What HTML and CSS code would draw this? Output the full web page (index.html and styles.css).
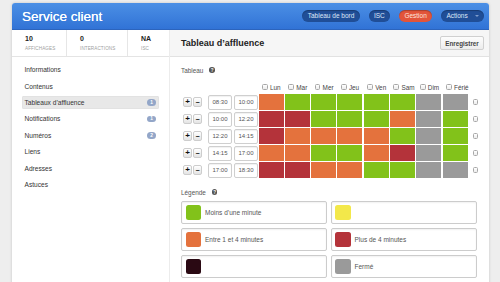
FILE: index.html
```html
<!DOCTYPE html>
<html lang="fr">
<head>
<meta charset="utf-8">
<title>Service client</title>
<link rel="stylesheet" href="styles.css">
</head>
<body>
<div class="app">
  <header class="topbar">
    <h1 class="brand">Service client</h1>
    <nav class="pills">
      <span class="pill">Tableau de bord</span>
      <span class="pill">ISC</span>
      <span class="pill active">Gestion</span>
      <span class="pill">Actions <span class="caret"></span></span>
    </nav>
  </header>
  <div class="body">
    <aside class="sidebar">
      <div class="stats">
        <div class="stat s1"><b>10</b><span>AFFICHAGES</span></div>
        <div class="stat s2"><b>0</b><span>INTERACTIONS</span></div>
        <div class="stat s3"><b>NA</b><span>ISC</span></div>
      </div>
      <ul class="nav">
        <li>Informations</li>
        <li>Contenus</li>
        <li class="sel">Tableaux d’affluence <span class="badge">1</span></li>
        <li>Notifications <span class="badge">1</span></li>
        <li>Numéros <span class="badge">2</span></li>
        <li>Liens</li>
        <li>Adresses</li>
        <li>Astuces</li>
      </ul>
    </aside>
    <main class="main">
      <div class="titlebar">
        <h2>Tableau d’affluence</h2>
        <button class="save">Enregistrer</button>
      </div>
      <div class="content">
        <div class="label">Tableau <span class="help">?</span></div>
        <div class="table">
          <div class="thead">
            <div class="spacer"></div>
            <div class="cells">
              <div class="hc"><span class="cb"></span>Lun</div>
              <div class="hc"><span class="cb"></span>Mar</div>
              <div class="hc"><span class="cb"></span>Mer</div>
              <div class="hc"><span class="cb"></span>Jeu</div>
              <div class="hc"><span class="cb"></span>Ven</div>
              <div class="hc"><span class="cb"></span>Sam</div>
              <div class="hc"><span class="cb"></span>Dim</div>
              <div class="hc"><span class="cb"></span>Férié</div>
            </div>
          </div>
          <div class="row">
            <span class="pm">+</span><span class="pm minus">−</span>
            <span class="time">08:30</span><span class="time t2">10:00</span>
            <div class="cells"><i class="o"></i><i class="g"></i><i class="g"></i><i class="g"></i><i class="g"></i><i class="g"></i><i class="x"></i><i class="x"></i></div>
            <span class="cb rcb"></span>
          </div>
          <div class="row">
            <span class="pm">+</span><span class="pm minus">−</span>
            <span class="time">10:00</span><span class="time t2">12:20</span>
            <div class="cells"><i class="r"></i><i class="r"></i><i class="g"></i><i class="g"></i><i class="g"></i><i class="o"></i><i class="x"></i><i class="g"></i></div>
            <span class="cb rcb"></span>
          </div>
          <div class="row">
            <span class="pm">+</span><span class="pm minus">−</span>
            <span class="time">12:20</span><span class="time t2">14:15</span>
            <div class="cells"><i class="r"></i><i class="o"></i><i class="o"></i><i class="o"></i><i class="o"></i><i class="g"></i><i class="x"></i><i class="g"></i></div>
            <span class="cb rcb"></span>
          </div>
          <div class="row">
            <span class="pm">+</span><span class="pm minus">−</span>
            <span class="time">14:15</span><span class="time t2">17:00</span>
            <div class="cells"><i class="o"></i><i class="o"></i><i class="g"></i><i class="g"></i><i class="o"></i><i class="r"></i><i class="x"></i><i class="g"></i></div>
            <span class="cb rcb"></span>
          </div>
          <div class="row">
            <span class="pm">+</span><span class="pm minus">−</span>
            <span class="time">17:00</span><span class="time t2">18:30</span>
            <div class="cells"><i class="r"></i><i class="r"></i><i class="o"></i><i class="o"></i><i class="g"></i><i class="g"></i><i class="x"></i><i class="x"></i></div>
            <span class="cb rcb"></span>
          </div>
        </div>
        <div class="label legend-label">Légende <span class="help">?</span></div>
        <div class="legend">
          <div class="item"><i class="sw g"></i>Moins d’une minute</div>
          <div class="item"><i class="sw y"></i></div>
          <div class="item"><i class="sw o"></i>Entre 1 et 4 minutes</div>
          <div class="item"><i class="sw r"></i>Plus de 4 minutes</div>
          <div class="item"><i class="sw d"></i></div>
          <div class="item"><i class="sw x"></i>Fermé</div>
        </div>
      </div>
    </main>
  </div>
</div>
</body>
</html>
```

FILE: styles.css
```css
* { box-sizing: border-box; }
html, body { height: 100%; }
body {
  margin: 0;
  background: #eeeeee;
  font-family: "Liberation Sans", Arial, sans-serif;
  color: #333;
  overflow: hidden;
}
.app {
  margin: 3px 0 0 12px;
  width: 477px;
  background: #fff;
  border-radius: 3px 3px 0 0;
  box-shadow: 0 0 3px rgba(0,0,0,0.18);
  min-height: 300px;
}
.topbar {
  height: 27px;
  display: flex;
  align-items: center;
  justify-content: space-between;
  padding: 0 5px 0 10px;
  background: linear-gradient(#4b8fe5, #3173d6);
  border-radius: 3px 3px 0 0;
  border-bottom: 1px solid #2c64bd;
}
.brand {
  margin: 0;
  font-size: 13.5px;
  font-weight: normal;
  color: #fff;
  text-shadow: 0 0 0.4px #fff;
}
.pills { display: flex; align-items: center; gap: 9px; }
.pill {
  height: 12.5px;
  line-height: 12.5px;
  padding: 0 5.3px;
  border-radius: 7px;
  background: #204e97;
  color: #dfe8f8;
  font-size: 6.5px;
  box-shadow: inset 0 1px 1px rgba(0,0,0,0.25);
  display: flex;
  align-items: center;
}
.pill.active { background: #e2543a; color: #ffe5dd; }
.caret {
  display: inline-block;
  width: 0; height: 0;
  margin-left: 7px;
  border-left: 2px solid transparent;
  border-right: 2px solid transparent;
  border-top: 2px solid #7f9ccc;
}
.body { display: flex; }
.sidebar {
  width: 158px;
  flex: none;
  border-right: 1px solid #ececec;
  min-height: 260px;
}
.stats {
  display: flex;
  height: 27px;
  border-bottom: 1px solid #e4e4e4;
}
.stat {
  display: flex;
  flex-direction: column;
  padding: 5px 0 0 13px;
  border-right: 1px solid #e6e6e6;
}
.stat b { font-size: 7px; line-height: 8px; color: #222; }
.stat span { font-size: 4.6px; color: #a0a0a0; margin-top: 3px; letter-spacing: 0.1px; }
.s1 { width: 55px; }
.s2 { width: 61px; }
.s3 { flex: 1; border-right: none; }
.nav {
  list-style: none;
  margin: 0;
  padding: 6px 10px 0 10px;
}
.nav li {
  height: 13.4px;
  margin-bottom: 3px;
  display: flex;
  align-items: center;
  justify-content: space-between;
  padding: 0 3px 0 2.5px;
  font-size: 6.6px;
  color: #333;
  border-radius: 2px;
}
.nav li.sel { background: #e8e8e8; box-shadow: inset 0 0 0 0.5px #dcdcdc; }
.badge {
  width: 9px;
  height: 6.5px;
  border-radius: 3.5px;
  background: #93a6c8;
  color: #fff;
  font-size: 4.8px;
  font-weight: bold;
  display: flex;
  align-items: center;
  justify-content: center;
}
.main { flex: 1; }
.titlebar {
  height: 27px;
  display: flex;
  align-items: center;
  justify-content: space-between;
  padding: 0 5px 0 11px;
  background: #f6f6f6;
  border-bottom: 1px solid #e2e2e2;
}
.titlebar h2 {
  margin: 0;
  font-size: 9px;
  font-weight: bold;
  color: #222;
}
.save {
  height: 14px;
  width: 44px;
  padding: 0;
  border: 1px solid #d0d0d0;
  border-radius: 2px;
  background: linear-gradient(#fdfdfd, #ececec);
  font-family: inherit;
  font-size: 6.3px;
  font-weight: bold;
  color: #444;
}
.content { padding: 9px 0 0 11px; }
.label {
  height: 8px;
  display: flex;
  align-items: center;
  font-size: 6.4px;
  color: #555;
}
.help {
  width: 5.5px;
  height: 5.5px;
  margin-left: 6px;
  border-radius: 50%;
  background: #555;
  color: #fff;
  font-size: 4.5px;
  font-weight: bold;
  display: flex;
  align-items: center;
  justify-content: center;
}
.table { margin-top: 9px; }
.thead { display: flex; height: 8px; margin-bottom: 3px; }
.spacer { width: 77.5px; flex: none; }
.cells {
  display: grid;
  grid-template-columns: repeat(8, 25px);
  column-gap: 1.3px;
}
.hc {
  display: flex;
  align-items: center;
  padding-left: 3.5px;
  gap: 2.2px;
  font-size: 6.4px;
  color: #444;
}
.cb {
  width: 5.8px;
  height: 5.8px;
  border: 0.8px solid #a8a8a8;
  border-radius: 1.5px;
  background: linear-gradient(#fff, #ececec);
  flex: none;
}
.row {
  display: flex;
  align-items: center;
  height: 16px;
  margin-bottom: 1px;
  padding-left: 2px;
}
.pm {
  width: 9px;
  height: 10px;
  margin-right: 1px;
  border: 1px solid #cdcdcd;
  border-radius: 2px;
  background: linear-gradient(#ffffff, #e4e4e4);
  font-size: 8px;
  font-weight: bold;
  line-height: 1;
  color: #111;
  display: flex;
  align-items: center;
  justify-content: center;
}
.pm.minus { margin-right: 6px; font-size: 7px; }
.time {
  width: 24px;
  height: 15px;
  margin-right: 2px;
  border: 1px solid #cfcfcf;
  border-radius: 2px;
  background: #fff;
  box-shadow: inset 0 1px 1px rgba(0,0,0,0.06);
  font-size: 6px;
  color: #555;
  display: flex;
  align-items: center;
  justify-content: center;
}
.time.t2 { margin-right: 0.5px; }
.row .cells i { display: block; height: 16px; }
.rcb { margin-left: 5px; }
.g { background: #82c21a; }
.o { background: #e4723d; }
.r { background: #b4333a; }
.x { background: #9a9a9a; }
.y { background: #f3e84a; }
.d { background: #2a0913; }
.legend-label { margin-top: 10px; }
.legend {
  margin-top: 5px;
  display: grid;
  grid-template-columns: 146px 146px;
  column-gap: 3.5px;
  row-gap: 4.5px;
}
.item {
  height: 22.5px;
  display: flex;
  align-items: center;
  padding-left: 3.5px;
  border: 1px solid #cccccc;
  border-radius: 2px;
  box-shadow: inset 0 1px 2px rgba(0,0,0,0.06);
  font-size: 6.5px;
  color: #555;
}
.sw {
  display: block;
  width: 15.5px;
  height: 15.5px;
  margin-right: 4px;
  border-radius: 2.5px;
  flex: none;
}
```
